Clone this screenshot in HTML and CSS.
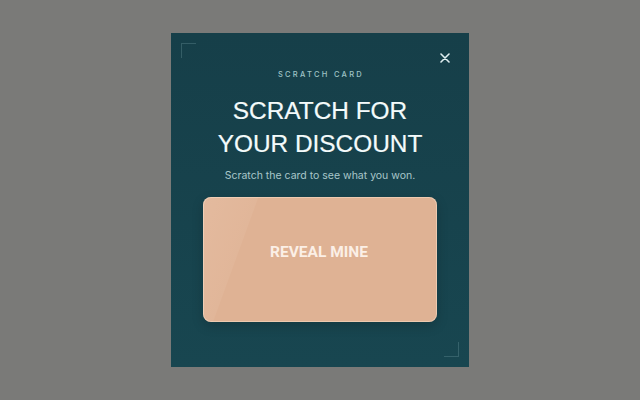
FILE: index.html
```html
<!DOCTYPE html>
<html>
<head>
<meta charset="utf-8">
<link rel="stylesheet" href="styles.css">
</head>
<body>
<div class="stage">
  <div class="modal">
    <span class="corner corner-tl"></span>
    <span class="corner corner-br"></span>
    <button class="close" aria-label="Close">
      <svg width="10" height="10" viewBox="0 0 10 10"><path d="M1 1L9 9M9 1L1 9" stroke="#dfeef0" stroke-width="1.6" stroke-linecap="round"/></svg>
    </button>
    <div class="eyebrow">SCRATCH CARD</div>
    <h1 class="title">SCRATCH FOR<br>YOUR DISCOUNT</h1>
    <p class="sub">Scratch the card to see what you won.</p>
    <div class="card">
      <span class="shine"></span>
      <span class="label">REVEAL MINE</span>
    </div>
  </div>
</div>
</body>
</html>
```
FILE: styles.css
```css
html, body { margin: 0; padding: 0; }
body { background: #7a7a78; font-family: "Inter", "Liberation Sans", sans-serif; }
.stage { width: 640px; height: 400px; display: flex; align-items: center; justify-content: center; }
.modal {
  position: relative;
  width: 298px; height: 334px;
  background: linear-gradient(180deg, #163f49 0%, #184650 100%);
  display: flex; flex-direction: column; align-items: center;
  box-sizing: border-box; padding-top: 37px;
  overflow: hidden;
}
.corner { position: absolute; width: 14px; height: 14px; border-color: rgba(160,200,205,0.22); border-style: solid; }
.corner-tl { left: 10px; top: 10px; border-width: 1px 0 0 1px; }
.corner-br { right: 10px; bottom: 10px; border-width: 0 1px 1px 0; }
.close { position: absolute; top: 20px; right: 19px; background: none; border: 0; padding: 0; width: 10px; height: 10px; display: flex; cursor: pointer; }
.eyebrow { font-size: 7.5px; letter-spacing: 2.3px; color: #9fc3c6; font-weight: 500; line-height: 10px; margin-left: 2px; }
.title { margin: 14px 0 0; font-family: "Liberation Sans", Arial, sans-serif; font-weight: 400; font-size: 24.4px; line-height: 33px; color: #f4fbfb; text-align: center; -webkit-text-stroke: 0.2px #f4fbfb; }
.sub { margin: 9px 0 0; font-size: 10.5px; color: #a9c7ca; line-height: 14px; }
.card {
  position: relative; overflow: hidden;
  margin-top: 14px;
  width: 234px; height: 125px; border-radius: 8px;
  background: #dfb294;
  box-shadow: 0 0 0 1px rgba(255,230,210,0.45) inset, 0 4px 12px rgba(0,0,0,0.18);
  display: flex; align-items: center; justify-content: center;
}
.shine { position: absolute; left: -40px; top: -20px; width: 70px; height: 180px; background: linear-gradient(90deg, rgba(255,235,220,0.16), rgba(255,235,220,0.07)); transform: skewX(-20deg); }
.label { position: relative; font-family: "Roboto", "Liberation Sans", sans-serif; font-weight: 700; font-size: 15.5px; color: #fbefe6; margin-top: -15px; margin-left: -2px; }
```
